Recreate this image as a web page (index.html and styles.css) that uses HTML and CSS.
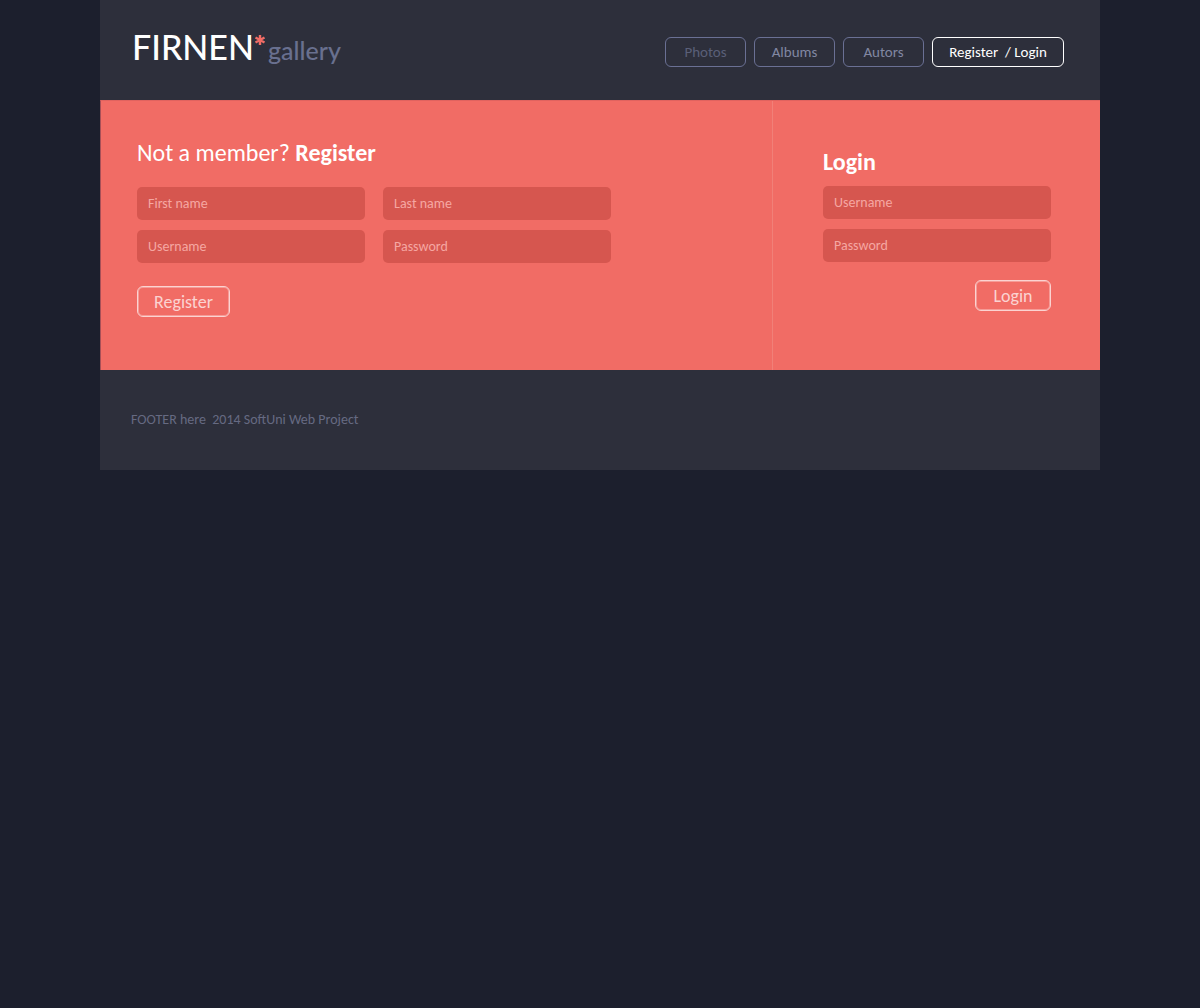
FILE: index.html
```html
<!DOCTYPE html>
<html lang="en">
<head>
<meta charset="utf-8">
<meta name="viewport" content="width=device-width, initial-scale=1">
<title>Firnen Gallery</title>
<link rel="stylesheet" href="styles.css">
</head>
<body>
<div class="page">
  <header class="header">
    <a class="logo" href="#"><span class="logo-name">FIRNEN</span><svg class="logo-star" viewBox="0 0 12 12" aria-hidden="true"><path d="M6 1v10M1.500 3.500l9 5M10.500 3.500l-9 5"/></svg><span class="logo-sub">gallery</span></a>
    <nav class="nav">
      <a class="nav-link nav-link-muted" href="#">Photos</a>
      <a class="nav-link" href="#">Albums</a>
      <a class="nav-link" href="#">Autors</a>
      <a class="nav-link nav-link-active" href="#">Register&nbsp; / Login</a>
    </nav>
  </header>
  <main class="main">
    <form class="panel register">
      <h2 class="title">Not a member? <strong>Register</strong></h2>
      <div class="fields fields-double">
        <input class="field" type="text" placeholder="First name" aria-label="First name">
        <input class="field" type="text" placeholder="Last name" aria-label="Last name">
        <input class="field" type="text" placeholder="Username" aria-label="Username">
        <input class="field" type="password" placeholder="Password" aria-label="Password">
      </div>
      <button class="button" type="submit">Register</button>
    </form>
    <form class="panel login">
      <h2 class="title"><strong>Login</strong></h2>
      <div class="fields">
        <input class="field" type="text" placeholder="Username" aria-label="Login username">
        <input class="field" type="password" placeholder="Password" aria-label="Login password">
      </div>
      <button class="button button-end" type="submit">Login</button>
    </form>
  </main>
  <footer class="footer">
    <p class="footer-text">FOOTER here&nbsp; 2014 SoftUni Web Project</p>
  </footer>
</div>
</body>
</html>
```
FILE: styles.css
```css
* {
  box-sizing: border-box;
}

body {
  margin: 0;
  background: #1c1f2d;
  font-family: Carlito, Lato, sans-serif;
  font-size: 14px;
  line-height: 16px;
}

.page {
  max-width: 1000px;
  margin: 0 auto;
}

.header {
  display: flex;
  justify-content: space-between;
  align-items: flex-start;
  min-height: 100px;
  padding: 27px 36px 24px 32px;
  background: #2d2f3b;
}

.logo {
  display: flex;
  align-items: baseline;
  line-height: 40px;
  text-decoration: none;
}

.logo-name {
  color: #fff;
  font-family: Lato, sans-serif;
  font-size: 34px;
  font-weight: 500;
}

.logo-star {
  align-self: flex-start;
  width: 12px;
  height: 12px;
  margin-top: 7px;
  fill: none;
  stroke: #f16c65;
  stroke-width: 2.400;
}

.logo-sub {
  margin-left: 2px;
  color: #69708f;
  font-family: Lato, sans-serif;
  font-size: 25px;
  font-weight: 500;
}

.nav {
  display: flex;
  gap: 8px;
  margin-top: 10px;
}

.nav-link {
  min-width: 81px;
  padding: 6px 14px;
  border: 1px solid #6a7094;
  border-radius: 6px;
  color: #8187a2;
  font-size: 15px;
  text-align: center;
  text-decoration: none;
  white-space: nowrap;
}

.nav-link-muted {
  color: #5a5f78;
}

.nav-link-active {
  min-width: 132px;
  border-color: #fff;
  color: #fff;
}

.main {
  display: flex;
  min-height: 270px;
  border-top: 1px solid #e0635f;
  border-left: 1px solid #a85057;
  background: #f16c65;
}

.panel {
  display: flex;
  flex-direction: column;
  align-items: flex-start;
}

.register {
  flex: 1;
  padding: 38px 36px 48px;
}

.login {
  padding: 47px 49px 48px 50px;
  border-left: 1px solid #f18078;
}

.title {
  margin: 0;
  color: #fff;
  font-size: 24px;
  font-weight: 400;
  line-height: 28px;
}

.fields {
  display: grid;
  grid-template-columns: 228px;
  gap: 10px 18px;
  margin: 10px 0 18px;
}

.fields-double {
  grid-template-columns: 228px 228px;
  margin: 20px 0 23px;
}

.field {
  width: 100%;
  height: 33px;
  padding: 0 11px;
  border: 0;
  border-radius: 5px;
  background: #d6564f;
  color: #fff;
  font: inherit;
}

.field::placeholder {
  color: #f5a7a2;
  opacity: 1;
}

.button {
  min-width: 76px;
  height: 31px;
  padding: 0 16px;
  border: 1px solid #fbd3d1;
  border-radius: 6px;
  background: transparent;
  box-shadow: inset 0 0 0 1px #f69c97;
  color: #fbd3d1;
  font: inherit;
  font-size: 18px;
}

.button-end {
  align-self: flex-end;
}

.footer {
  min-height: 100px;
  padding: 42px 31px;
  background: #2d2f3b;
}

.footer-text {
  margin: 0;
  color: #666a82;
}
```
